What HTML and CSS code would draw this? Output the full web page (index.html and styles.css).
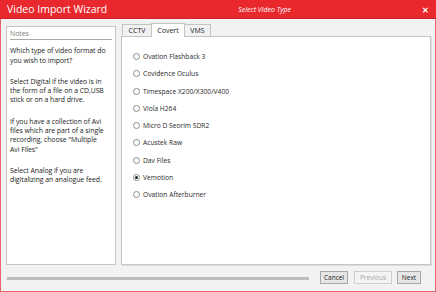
FILE: index.html
```html
<!DOCTYPE html>
<html lang="en">
  <head>
    <meta charset="UTF-8" />
    <title>Video Import Wizard</title>
    <link rel="stylesheet" href="styles.css">
  </head>
  <body>
    <div class="window">
      <div class="titlebar">
        <span class="title">Video Import Wizard</span>
        <span class="subtitle">Select Video Type</span>
        <span class="close">&#x2715;</span>
      </div>

      <div class="main">
        <div class="notes">
          <div class="notes-head">Notes</div>
          <p>Which type of video format do<br>you wish to import?</p>
          <p>Select Digital if the video is in<br>the form of a file on a CD,USB<br>stick or on a hard drive.</p>
          <p>If you have a collection of Avi<br>files which are part of a single<br>recording, choose "Multiple<br>Avi Files"</p>
          <p>Select Analog if you are<br>digitalizing an analogue feed.</p>
        </div>

        <div class="types">
          <div class="tabs">
            <span class="tab">CCTV</span>
            <span class="tab active">Covert</span>
            <span class="tab">VMS</span>
          </div>
          <div class="tab-panel">
            <ul class="radio-list">
              <li><span class="radio"></span>Ovation Flashback 3</li>
              <li><span class="radio"></span>Covidence Oculus</li>
              <li><span class="radio"></span>Timespace X200/X300/V400</li>
              <li><span class="radio"></span>Viola H264</li>
              <li><span class="radio"></span>Micro D Seorim SDR2</li>
              <li><span class="radio"></span>Acustek Raw</li>
              <li><span class="radio"></span>Dav Files</li>
              <li><span class="radio checked"></span>Vemotion</li>
              <li><span class="radio"></span>Ovation Afterburner</li>
            </ul>
          </div>
        </div>
      </div>

      <div class="footer">
        <div class="progress"></div>
        <button class="btn">Cancel</button>
        <button class="btn disabled">Previous</button>
        <button class="btn">Next</button>
      </div>
    </div>
  </body>
</html>
```

FILE: styles.css
```css
* {
  margin: 0;
  padding: 0;
  box-sizing: border-box;
}

body {
  width: 436px;
  height: 292px;
  overflow: hidden;
  background: #f2f2f2;
  font-family: "Open Sans", "Noto Sans", sans-serif;
  color: #1c1c1c;
}

.window {
  width: 436px;
  height: 292px;
  display: flex;
  flex-direction: column;
  background: #f2f2f2;
  border: 1px solid #e8666b;
  border-top: none;
}

.titlebar {
  height: 19px;
  display: flex;
  align-items: center;
  background: #e8282d;
  border-bottom: 1px solid #cf2227;
  color: #ffffff;
  margin: 0 -1px;
  padding: 0 6px 0 7px;
}

.title {
  font-size: 10.5px;
}

.subtitle {
  flex: 1;
  text-align: center;
  font-size: 7px;
  font-style: italic;
}

.close {
  font-size: 8px;
  font-weight: bold;
  padding-right: 1px;
}

.main {
  flex: 1;
  display: flex;
  gap: 5px;
  padding: 3px 4px 0 5px;
  min-height: 0;
}

.notes {
  width: 110px;
  margin-top: 4px;
  background: #ffffff;
  border: 1px solid #c4c4c4;
  padding: 2px 1px 2px 3px;
  font-size: 6.9px;
  letter-spacing: -0.05px;
  line-height: 9.3px;
  color: #222222;
  white-space: nowrap;
  overflow: hidden;
}

.notes-head {
  color: #7a7a7a;
  padding-bottom: 1px;
  border-bottom: 1px solid #a8a8a8;
  margin: 0 2px 6px 0;
}

.notes p {
  margin-bottom: 12px;
}

.types {
  flex: 1;
  display: flex;
  flex-direction: column;
}

.tabs {
  display: flex;
  align-items: flex-end;
  height: 14px;
  padding-left: 1px;
}

.tab {
  height: 12px;
  padding: 0 5px;
  font-size: 7px;
  line-height: 11px;
  text-align: center;
  background: #f2f2f2;
  border: 1px solid #c4c4c4;
  border-bottom: none;
  margin-right: -1px;
}

.tab:first-child {
  width: 30px;
}

.tab.active {
  width: 34px;
  height: 14px;
  background: #ffffff;
  position: relative;
  z-index: 1;
  margin-bottom: -1px;
  line-height: 14px;
}

.tab:last-child {
  width: 27px;
}

.tab-panel {
  flex: 1;
  background: #ffffff;
  border: 1px solid #c4c4c4;
  box-shadow: 1px 1px 0 #dedede;
  padding-top: 11px;
}

.radio-list {
  list-style: none;
  padding-left: 11px;
}

.radio-list li {
  height: 17.25px;
  display: flex;
  align-items: center;
  font-size: 6.7px;
  color: #2a2a2a;
}

.radio {
  width: 7px;
  height: 7px;
  border: 1px solid #8a8a8a;
  border-radius: 50%;
  margin-right: 3px;
  display: flex;
  align-items: center;
  justify-content: center;
}

.radio.checked::after {
  content: "";
  width: 3px;
  height: 3px;
  border-radius: 50%;
  background: #1c1c1c;
}

.footer {
  height: 26px;
  display: flex;
  align-items: center;
  padding: 0 7px 2px 6px;
}

.progress {
  width: 302px;
  height: 3px;
  background: #bdbdbd;
  margin-right: 11px;
  margin-top: 2px;
}

.btn {
  height: 13px;
  padding: 0 3px;
  font-family: "Open Sans", "Noto Sans", sans-serif;
  font-size: 6.5px;
  color: #1c1c1c;
  background: #e6e6e6;
  border: 1px solid #a9a9a9;
  margin-right: 6px;
}

.btn:first-of-type {
  width: 28px;
}

.btn.disabled {
  width: 38px;
  color: #a8a8a8;
  background: #f4f4f4;
  border-color: #cfcfcf;
  margin-right: 5px;
}

.btn:last-child {
  width: 24px;
  margin-right: 0;
}
```
